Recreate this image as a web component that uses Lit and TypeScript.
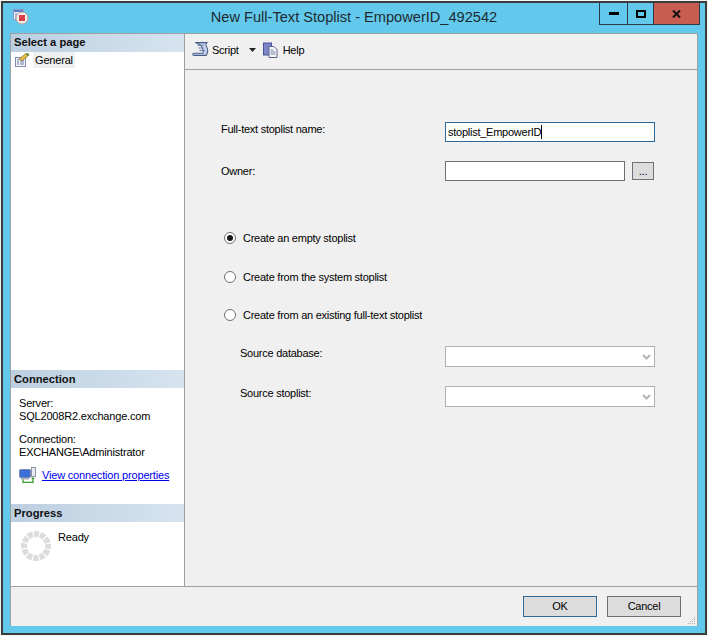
import { LitElement, html, css } from "lit";
import { customElement } from "lit/decorators.js";

const spinner = () => html`<svg class="spin" width="30" height="30" viewBox="0 0 30 30"><circle cx="15" cy="15" r="12" fill="none" stroke="#dcdcdc" stroke-width="6" stroke-dasharray="5.080 1.203" stroke-dashoffset="2.500"/></svg>`;

const chevron = () => html`<svg width="9" height="6"><path d="M1 1l3.500 3.500L8 1" fill="none" stroke="#b4b4b4" stroke-width="2"/></svg>`;

@customElement("app-root")
export class AppRoot extends LitElement {
  static styles = css`
    :host { display: block; width: 708px; height: 636px; background: #f4f4f4; font: 11px "Liberation Sans", Arial, sans-serif; letter-spacing: -0.25px; color: #000; overflow: hidden; }
    .win { box-sizing: border-box; width: 706px; height: 634px; margin: 1px 0 0 1px; border: 2px solid #3c3c3c; background: #62c9ec; display: flex; flex-direction: column; }
    .title { height: 30px; flex: none; display: flex; align-items: flex-start; position: relative; padding-left: 10px; }
    .ticon { margin-top: 6px; flex: none; }
    .ttext { position: absolute; left: 0; right: 0; top: 6px; text-align: center; font: 14.6px "Liberation Sans", Arial, sans-serif; letter-spacing: 0; color: #1e2a30; }
    .ctrls { position: absolute; right: 5px; top: 0; display: flex; height: 21px; border: solid #2a3b45; border-width: 0 1px 1px 1px; box-sizing: content-box; }
    .cb { display: flex; align-items: center; justify-content: center; height: 21px; box-sizing: border-box; }
    .cb.min { width: 28px; border-right: 1px solid #2a3b45; }
    .cb.max { width: 26px; border-right: 1px solid #2a3b45; }
    .cb.close { width: 45px; background: #c75c50; }
    .client { margin: 0 7px 7px 7px; flex: 1; min-height: 0; border: solid #a0a0a0; border-width: 1px 1px 0 1px; background: #f0f0f0; display: flex; flex-direction: column; }
    .main { flex: 1; min-height: 0; display: flex; border-bottom: 1px solid #a0a0a0; }
    .left { width: 173px; flex: none; background: #fff; border-right: 1px solid #a0a0a0; display: flex; flex-direction: column; letter-spacing: -0.18px; }
    .hdr { height: 18px; flex: none; background: linear-gradient(90deg, #bccfe0, #d6e4f0); font: 700 11.2px/18px "Liberation Sans", Arial, sans-serif; letter-spacing: 0; padding-left: 3px; color: #101010; }
    .hdr.first { line-height: 16px; }
    .nav { height: 318px; flex: none; }
    .navitem { display: flex; align-items: center; height: 16px; padding-left: 3px; }
    .navitem span { background: #f0f0f0; padding: 0 2px; margin-left: 3px; line-height: 16px; }
    .conn { height: 116px; flex: none; padding: 9px 0 0 8px; box-sizing: border-box; line-height: 13px; }
    .conn p { margin: 0 0 10px; }
    .link { display: flex; align-items: center; gap: 5px; margin-top: -2px; }
    .link a { color: #0000ee; text-decoration: underline; }
    .prog { display: flex; padding: 9px 0 0 10px; gap: 7px; }
    .prog span { line-height: 14px; margin-top: -1px; }
    .right { flex: 1; min-width: 0; display: flex; flex-direction: column; }
    .tb { height: 31px; flex: none; border-bottom: 1px solid #a0a0a0; display: flex; align-items: center; padding: 0 0 4px 7px; box-sizing: content-box; }
    .tb .t { margin-left: 3px; }
    .tb .t.help { margin-left: 4px; }
    .tb .arrow { margin: 0 7px 0 10px; }
    .form { flex: 1; padding: 52px 42px 0 36px; }
    .row { display: flex; align-items: center; }
    .lbl { width: 224px; flex: none; }
    .r1 .lbl { margin-bottom: 6px; }
    .in { box-sizing: border-box; height: 20px; background: #fff; border: 1px solid #707070; font: inherit; padding-left: 2px; line-height: 18px; }
    .in.focus { width: 210px; border-color: #2b6a9e; }
    .caret { display: inline-block; width: 1px; height: 14px; background: #000; vertical-align: -3px; }
    .in.owner { width: 180px; }
    .dots { box-sizing: border-box; width: 22px; height: 18px; margin-left: 7px; background: #dcdcdc; border: 1px solid #707070; text-align: center; line-height: 17px; }
    .r1 { height: 20px; }
    .r2 { height: 20px; margin-top: 19px; }
    .radios { display: flex; flex-direction: column; margin: 50px 0 0 3px; gap: 25px; }
    .radio { display: flex; align-items: center; gap: 7px; height: 13px; }
    .radio:nth-child(2) { margin-top: 1px; }
    .dot { box-sizing: border-box; width: 12px; height: 12px; border-radius: 50%; border: 1px solid #707070; background: #fff; display: flex; align-items: center; justify-content: center; flex: none; }
    .dot.on::after { content: ""; width: 6px; height: 6px; background: #1a1a1a; border-radius: 50%; }
    .combos { margin: 25px 0 0 19px; display: flex; flex-direction: column; gap: 19px; }
    .combos .row { align-items: flex-start; height: 21px; }
    .combos .lbl { width: 205px; margin-top: 1px; }
    .combo { box-sizing: border-box; width: 210px; height: 21px; background: #fff; border: 1px solid #abb2b2; display: flex; align-items: center; justify-content: flex-end; padding-right: 3px; }
    .foot { height: 39px; flex: none; display: flex; justify-content: flex-end; gap: 10px; padding: 9px 16px 0 0; box-sizing: border-box; position: relative; }
    .btn { box-sizing: border-box; width: 74px; height: 21px; background: #dcdcdc; border: 1px solid #707070; text-align: center; line-height: 19px; }
    .btn.def { border-color: #2b6a9e; }
    .grip { position: absolute; right: 1px; bottom: 1px; }
  `;

  render() {
    return html`<div class="win">
      <div class="title">
        <svg class="ticon" width="16" height="16" viewBox="0 0 16 16">
          <rect x="0.500" y="0.500" width="10" height="10" fill="#e6ecf6" stroke="#8a9cc8"/>
          <rect x="1" y="1" width="9" height="2" fill="#5b80c8"/>
          <path d="M2 5h2M2 7h2M2 9h2" stroke="#7c8cb8"/>
          <circle cx="9" cy="9" r="6" fill="#f4f0ee" stroke="#b89a96"/>
          <rect x="6" y="6" width="6" height="6" fill="#d8404a"/>
        </svg>
        <div class="ttext">New Full-Text Stoplist - EmpowerID_492542</div>
        <div class="ctrls">
          <div class="cb min"><svg width="10" height="3"><rect width="10" height="3" fill="#000" y="0"/></svg></div>
          <div class="cb max"><svg width="10" height="8"><path d="M1 1h8v6h-8z" fill="none" stroke="#000" stroke-width="2"/></svg></div>
          <div class="cb close"><svg width="9" height="8" viewBox="0 0 9 8"><path d="M1 0.500l7 7M8 0.500l-7 7" stroke="#111" stroke-width="2"/></svg></div>
        </div>
      </div>
      <div class="client">
        <div class="main">
          <div class="left">
            <div class="hdr first">Select a page</div>
            <div class="nav">
              <div class="navitem">
                <svg width="16" height="16" viewBox="0 0 16 16">
                  <rect x="1.500" y="5.500" width="10" height="9" fill="#f2f4fa" stroke="#7e8db0"/>
                  <path d="M3 8h2M3 10h2M3 12h2M6 8h4M6 10h4M6 12h4" stroke="#6a7fb0"/>
                  <path d="M5 7l7-5.500 3 1.500-7 6z" fill="#e8bc4a" stroke="#8a7020" stroke-width=".7"/>
                  <path d="M12 1l3.500 1-2 2z" fill="#3a8a3a"/>
                </svg>
                <span>General</span>
              </div>
            </div>
            <div class="hdr">Connection</div>
            <div class="conn">
              <p>Server:<br />SQL2008R2.exchange.com</p>
              <p>Connection:<br />EXCHANGE\\Administrator</p>
              <div class="link">
                <svg width="18" height="16" viewBox="0 0 18 16">
                  <rect x="0.500" y="2.500" width="11" height="8" rx="1" fill="#3a6fd8" stroke="#7a8aa8"/>
                  <rect x="2" y="11" width="8" height="1.500" fill="#a8b0c0"/>
                  <rect x="12.500" y="0.500" width="4" height="9" fill="#e8ecf2" stroke="#8c94a4"/>
                  <path d="M4 12.500v3h10v-4" fill="none" stroke="#3a9a30" stroke-width="1.300"/>
                  <path d="M12 12l2-2 2 2z" fill="#3a9a30"/>
                </svg>
                <a>View connection properties</a>
              </div>
            </div>
            <div class="hdr">Progress</div>
            <div class="prog">${spinner()}<span>Ready</span></div>
          </div>
          <div class="right">
            <div class="tb">
              <svg width="17" height="17" viewBox="0 0 16 16">
                <path d="M3 1.500h11c-1.500 1-1 2.500 0 4.500s1 5-.5 7.500H2c-1.500 0-2-2 0-2h8c1 0 .5-3-.5-5.500S3 1.500 3 1.500z" fill="#c4d3ec" stroke="#4a5f88"/>
                <path d="M5 4h6M6 6.500h5M7 9h5" stroke="#6880b0"/>
              </svg>
              <span class="t">Script</span>
              <svg class="arrow" width="7" height="4"><path d="M0 0h7l-3.500 4z" fill="#222"/></svg>
              <svg width="16" height="16" viewBox="0 0 16 16">
                <rect x="0.500" y="1" width="8" height="12" fill="#7c86c8" stroke="#4a5298"/>
                <path d="M6 4.500h5l3 3v8h-8z" fill="#f4f6fa" stroke="#5a6488"/>
                <path d="M7.500 8h3M7.500 10h5M7.500 12h5" stroke="#7a86a8"/>
              </svg>
              <span class="t help">Help</span>
            </div>
            <div class="form">
              <div class="row r1"><div class="lbl">Full-text stoplist name:</div><div class="in focus">stoplist_EmpowerID<span class="caret"></span></div></div>
              <div class="row r2"><div class="lbl">Owner:</div><div class="in owner"></div><div class="dots">...</div></div>
              <div class="radios">
                <div class="radio"><div class="dot on"></div>Create an empty stoplist</div>
                <div class="radio"><div class="dot"></div>Create from the system stoplist</div>
                <div class="radio"><div class="dot"></div>Create from an existing full-text stoplist</div>
              </div>
              <div class="combos">
                <div class="row"><div class="lbl">Source database:</div><div class="combo">${chevron()}</div></div>
                <div class="row"><div class="lbl">Source stoplist:</div><div class="combo">${chevron()}</div></div>
              </div>
            </div>
          </div>
        </div>
        <div class="foot">
          <div class="btn def">OK</div>
          <div class="btn">Cancel</div>
          <svg class="grip" width="9" height="9" fill="#b0b0b0"><rect x="7" y="1" width="1" height="1"/><rect x="5" y="3" width="1" height="1"/><rect x="7" y="3" width="1" height="1"/><rect x="3" y="5" width="1" height="1"/><rect x="5" y="5" width="1" height="1"/><rect x="7" y="5" width="1" height="1"/><rect x="1" y="7" width="1" height="1"/><rect x="3" y="7" width="1" height="1"/><rect x="5" y="7" width="1" height="1"/><rect x="7" y="7" width="1" height="1"/></svg>
        </div>
      </div>
    </div>`;
  }
}
